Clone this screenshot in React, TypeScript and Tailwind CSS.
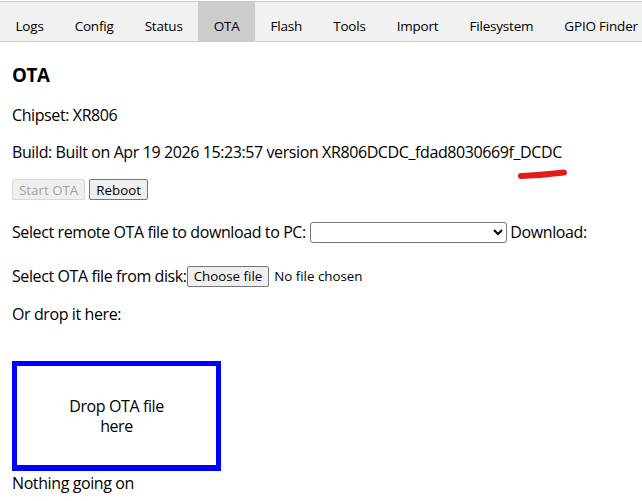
import React from "react";

const tabs = ["Logs", "Config", "Status", "OTA", "Flash", "Tools", "Import", "Filesystem", "GPIO Finder"];

const FONT = "font-['Segoe_UI','Open_Sans',sans-serif]";

export default function App() {
  return (
    <div className={`min-h-screen bg-white text-black ${FONT}`}>
      {/* Tab bar */}
      <div className="mt-[1px] flex overflow-hidden border-y border-[#ccc] bg-[#f1f1f1]">
        {tabs.map((t) => (
          <div
            key={t}
            className={`px-[15.5px] pt-[9px] h-[39px] flex items-center whitespace-nowrap text-[13.5px] tracking-[-0.2px] ${
              t === "OTA" ? "bg-[#ccc]" : ""
            }`}
          >
            {t}
          </div>
        ))}
      </div>

      <div className="px-3 text-[16px] leading-[21px] tracking-[-0.4px]">
        <h3 className="mt-[21px] text-[18.72px] font-bold leading-[24px]">OTA</h3>

        <p className="mt-[18px]">Chipset: XR806</p>

        <p className="relative mt-4">
          Build: Built on Apr 19 2026 15:23:57 version XR806DCDC_fdad8030669f_DCDC
          <svg
            className="absolute left-[506px] top-[26px]"
            width="50"
            height="12"
            viewBox="0 0 50 12"
          >
            <path d="M3 8 Q 20 7.5 46 4.5" stroke="#e21b1b" strokeWidth="6" strokeLinecap="round" fill="none" />
          </svg>
        </p>

        <div className="mt-[16px] flex gap-1 tracking-normal">
          <button
            disabled
            className="h-[21px] px-[6px] border border-[#d7d7d7] rounded-[2px] bg-[#efefef] text-[13.33px] text-[#a2a2a2]"
          >
            Start OTA
          </button>
          <button className="h-[21px] px-[6px] border border-[#767676] rounded-[2px] bg-[#efefef] text-[13.33px]">
            Reboot
          </button>
        </div>

        <div className="mt-[22px] flex items-center">
          <span>Select remote OTA file to download to PC:&nbsp;</span>
          <select className="w-[197px] h-[21px] border border-[#767676] rounded-[3px] bg-white text-[13.33px]">
            <option></option>
          </select>
          <span>&nbsp;Download:</span>
        </div>

        <div className="mt-[23px] flex items-center">
          <span>Select OTA file from disk:</span>
          <label className="flex items-center text-[13.33px] tracking-normal">
            <span className="h-[21px] px-[6px] flex items-center border border-[#767676] rounded-[2px] bg-[#efefef]">
              Choose file
            </span>
            <span className="ml-[5px]">No file chosen</span>
            <input type="file" className="hidden" />
          </label>
        </div>

        <p className="mt-[17px]">Or drop it here:</p>

        <div className="mt-[36px] w-[209px] h-[110px] border-[5px] border-b-[6px] border-[#0000ff] flex items-center justify-center">
          <div className="w-[110px] text-center leading-[20px]">Drop OTA file here</div>
        </div>

        <p className="mt-[2px]">Nothing going on</p>
      </div>
    </div>
  );
}
